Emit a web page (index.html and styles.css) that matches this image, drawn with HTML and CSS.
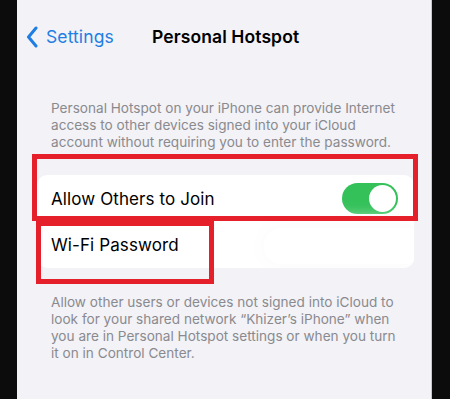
FILE: index.html
```html
<!DOCTYPE html>
<html>
<head>
<meta charset="utf-8">
<link rel="stylesheet" href="styles.css">
</head>
<body>
<div class="screen">
  <header class="nav">
    <div class="back">
      <svg class="chev" width="12" height="22" viewBox="0 0 12 22"><path d="M10 2 L2.5 11 L10 20" fill="none" stroke="#1f7ee3" stroke-width="3" stroke-linecap="round" stroke-linejoin="round"/></svg>
      <span class="back-label">Settings</span>
    </div>
    <div class="title">Personal Hotspot</div>
  </header>
  <p class="note top-note">Personal Hotspot on your iPhone can provide Internet access to other devices signed into your iCloud account without requiring you to enter the password.</p>
  <div class="card">
    <div class="row">
      <span class="label">Allow Others to Join</span>
      <span class="toggle"><span class="knob"></span></span>
    </div>
    <div class="row row2">
      <span class="label">Wi-Fi Password</span>
      <span class="blur"></span>
    </div>
  </div>
  <p class="note bottom-note">Allow other users or devices not signed into iCloud to look for your shared network “Khizer’s iPhone” when you are in Personal Hotspot settings or when you turn it on in Control Center.</p>
  <div class="mark mark1"></div>
  <div class="mark mark2"></div>
</div>
</body>
</html>
```

FILE: styles.css
```css
html, body {
  margin: 0;
  padding: 0;
  background: #0c0c0c;
  height: 399px;
  overflow: hidden;
}
.screen {
  position: relative;
  margin-left: 17px;
  width: 414px;
  height: 399px;
  background: #f2f2f7;
  border-right: 1px solid #c9c9cc;
  font-family: Inter, "Open Sans", "Liberation Sans", sans-serif;
  color: #000;
}
.nav {
  display: flex;
  align-items: center;
  height: 73px;
  padding-left: 9px;
}
.back {
  display: flex;
  align-items: center;
  gap: 8px;
  width: 126px;
}
.chev { display: block; }
.back-label {
  color: #1f7ee3;
  font-size: 17.5px;
  letter-spacing: 0.1px;
}
.title {
  font-size: 17.5px;
  font-weight: 600;
  letter-spacing: 0.1px;
}
.note {
  margin: 0;
  color: #8a8a8e;
  font-size: 13.6px;
  line-height: 16.8px;
  padding-left: 34px;
  width: 352px;
}
.top-note {
  margin-top: 27px;
}
.card {
  margin: 25px 0 0 20px;
  width: 377px;
  background: #fff;
  border-radius: 10px;
  overflow: hidden;
  position: relative;
}
.row {
  display: flex;
  align-items: center;
  justify-content: space-between;
  height: 47px;
  padding: 0 16px 0 14px;
  position: relative;
}
.row2 { height: 46px; }
.label {
  font-size: 17px;
  letter-spacing: 0.1px;
}
.toggle {
  position: relative;
  width: 56px;
  height: 31px;
  border-radius: 16px;
  background: #34c15a;
}
.knob {
  position: absolute;
  right: 2px;
  top: 2px;
  width: 27px;
  height: 27px;
  border-radius: 50%;
  background: #fff;
}
.blur {
  position: absolute;
  right: -10px;
  top: 6px;
  width: 160px;
  height: 36px;
  border-radius: 20px;
  background: #fff;
  box-shadow: 0 0 16px 8px #fdfdfe;
}
.bottom-note {
  margin-top: 26px;
}
.mark {
  position: absolute;
  border: 5px solid #e6202b;
  box-sizing: border-box;
}
.mark1 {
  left: 15px;
  top: 154px;
  width: 386px;
  height: 67px;
}
.mark2 {
  left: 19px;
  top: 221px;
  width: 178px;
  height: 63px;
}
```
